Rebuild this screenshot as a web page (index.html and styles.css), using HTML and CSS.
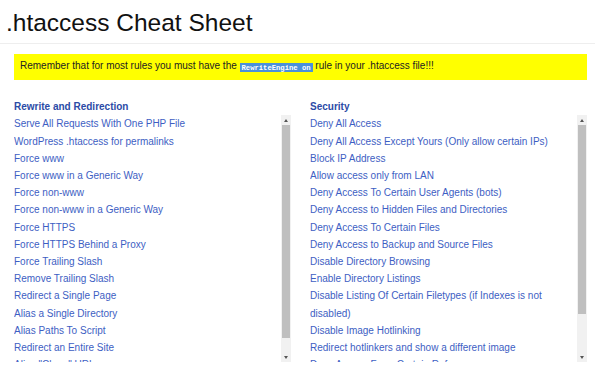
FILE: index.html
```html
<!DOCTYPE html>
<html lang="en">
<head>
<meta charset="UTF-8" />
<title>.htaccess Cheat Sheet</title>
<link rel="stylesheet" href="styles.css">
</head>
<body>
  <!-- Titre -->
  <h1 class="page-title">.htaccess Cheat Sheet</h1>

  <!-- Note -->
  <div class="notice">
    Remember that for most rules you must have the <code class="tag">RewriteEngine on</code> rule in your .htaccess file!!!
  </div>

  <!-- Sections -->
  <div class="sections">
    <div class="section">
      <h2 class="section-title">Rewrite and Redirection</h2>
      <div class="panel">
        <div class="items">
          <a href="#">Serve All Requests With One PHP File</a>
          <a href="#">WordPress .htaccess for permalinks</a>
          <a href="#">Force www</a>
          <a href="#">Force www in a Generic Way</a>
          <a href="#">Force non-www</a>
          <a href="#">Force non-www in a Generic Way</a>
          <a href="#">Force HTTPS</a>
          <a href="#">Force HTTPS Behind a Proxy</a>
          <a href="#">Force Trailing Slash</a>
          <a href="#">Remove Trailing Slash</a>
          <a href="#">Redirect a Single Page</a>
          <a href="#">Alias a Single Directory</a>
          <a href="#">Alias Paths To Script</a>
          <a href="#">Redirect an Entire Site</a>
          <a href="#">Alias "Clean" URLs</a>
        </div>
        <div class="scrollbar">
          <div class="arrow up"></div>
          <div class="track"><div class="thumb" style="height:213px"></div></div>
          <div class="arrow down"></div>
        </div>
      </div>
    </div>

    <div class="section">
      <h2 class="section-title">Security</h2>
      <div class="panel">
        <div class="items">
          <a href="#">Deny All Access</a>
          <a href="#">Deny All Access Except Yours (Only allow certain IPs)</a>
          <a href="#">Block IP Address</a>
          <a href="#">Allow access only from LAN</a>
          <a href="#">Deny Access To Certain User Agents (bots)</a>
          <a href="#">Deny Access to Hidden Files and Directories</a>
          <a href="#">Deny Access To Certain Files</a>
          <a href="#">Deny Access to Backup and Source Files</a>
          <a href="#">Disable Directory Browsing</a>
          <a href="#">Enable Directory Listings</a>
          <a href="#">Disable Listing Of Certain Filetypes (if Indexes is not disabled)</a>
          <a href="#">Disable Image Hotlinking</a>
          <a href="#">Redirect hotlinkers and show a different image</a>
          <a href="#">Deny Access From Certain Referrers</a>
        </div>
        <div class="scrollbar">
          <div class="arrow up"></div>
          <div class="track"><div class="thumb" style="height:189px"></div></div>
          <div class="arrow down"></div>
        </div>
      </div>
    </div>
  </div>
</body>
</html>
```

FILE: styles.css
```css
/* ========== Global ========== */
html, body {
  margin: 0;
  height: 100%;
  overflow: hidden;
  font-family: "Liberation Sans", Arial, sans-serif;
  background: #fff;
  color: #333;
}
/* Titre */
.page-title {
  margin: 0 5px 0 0;
  padding: 7.5px 0 5px 6px;
  font-size: 24.5px;
  font-weight: normal;
  line-height: 30px;
  color: #111;
  border-bottom: 1px solid #eee;
}
/* Note jaune */
.notice {
  margin: 10px 13px 0 14px;
  padding: 5.5px 6px 7.2px;
  background: #ffff00;
  font-size: 10px;
  line-height: 14px;
  color: #222;
}
.tag {
  font-family: "Liberation Mono", "DejaVu Sans Mono", monospace;
  font-weight: bold;
  font-size: 7.2px;
  line-height: 1;
  padding: 0.5px 2px;
  background: #4a90d9;
  color: #fff;
}
/* Colonnes */
.sections {
  display: grid;
  grid-template-columns: 277px 277px;
  column-gap: 19px;
  margin: 18px 0 0 14px;
}
.section-title {
  margin: 0;
  font-size: 10px;
  font-weight: bold;
  line-height: 17.2px;
  color: #2b4ba6;
}
.panel {
  display: flex;
  height: 247px;
}
.items {
  flex: 1;
  overflow: hidden;
}
.items a {
  display: block;
  font-size: 10px;
  line-height: 17.2px;
  color: #3d5ec3;
  text-decoration: none;
}
/* Barre de défilement */
.scrollbar {
  width: 10px;
  display: flex;
  flex-direction: column;
  background: #f1f1f1;
}
.track {
  flex: 1;
  padding: 0 1px;
}
.thumb {
  background: #bfbfbf;
}
.arrow {
  height: 10px;
  display: flex;
  justify-content: center;
  align-items: center;
}
.arrow::before {
  content: "";
  width: 0;
  height: 0;
  border-left: 2.5px solid transparent;
  border-right: 2.5px solid transparent;
}
.arrow.up::before {
  border-bottom: 3px solid #555;
}
.arrow.down::before {
  border-top: 3px solid #555;
}
```
